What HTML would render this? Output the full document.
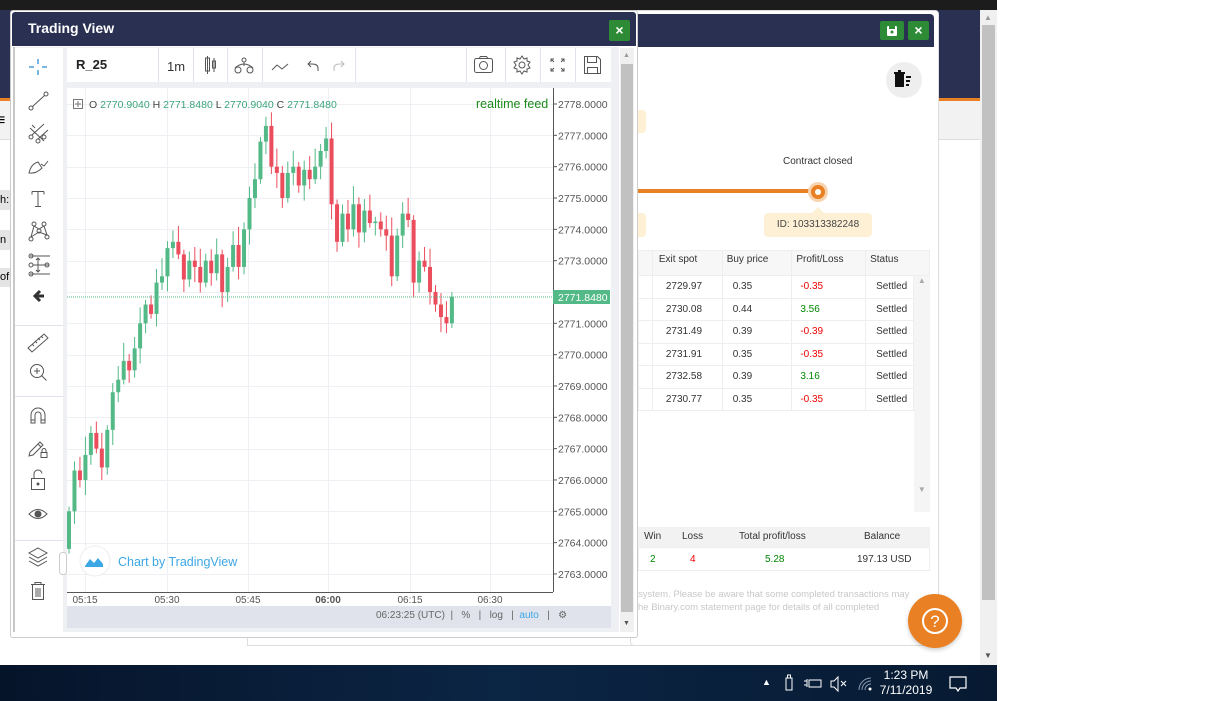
<!DOCTYPE html>
<html><head><meta charset="utf-8"><style>
*{margin:0;padding:0;box-sizing:border-box}
body{width:1219px;height:701px;position:relative;overflow:hidden;background:#fff;font-family:"Liberation Sans",sans-serif}
.a{position:absolute}
.tb td{border:1px solid #eee;font-size:10px;color:#333;padding-left:20px;height:22.5px}
</style></head><body>
<!-- background page -->
<div class="a" style="left:0;top:0;width:997px;height:665px;background:#fff"></div>
<div class="a" style="left:0;top:0;width:997px;height:10px;background:#1c1c1c"></div>
<div class="a" style="left:0;top:10px;width:980px;height:88px;background:#2a3052"></div>
<div class="a" style="left:0;top:98px;width:980px;height:3px;background:#e98024"></div>
<div class="a" style="left:0;top:101px;width:980px;height:39px;background:#f2f2f2;border-bottom:1px solid #ddd"></div>
<div class="a" style="left:-4px;top:112px;font-size:16px;font-weight:bold">≡</div>
<div class="a" style="left:0;top:190px;width:10px;height:20px;background:#e4e4e4;font-size:11px;line-height:20px">h:</div>
<div class="a" style="left:0;top:230px;width:10px;height:20px;background:#e4e4e4;font-size:11px;line-height:20px">n</div>
<div class="a" style="left:0;top:268px;width:10px;height:19px;background:#e4e4e4;font-size:11px;line-height:19px">of.</div>
<div class="a" style="left:247px;top:560px;width:690px;height:86px;border:1px solid #ddd;border-top:none;background:#fff"></div>
<div class="a" style="left:980px;top:10px;width:17px;height:655px;background:#f0f0f0"></div>
<div class="a" style="left:982px;top:25px;width:13px;height:575px;background:#c1c1c1"></div>
<div class="a" style="left:984px;top:13px;font-size:8px;color:#999">▲</div>
<div class="a" style="left:984px;top:651px;font-size:8px;color:#555">▼</div>

<!-- right panel (journal) -->
<div class="a" style="left:630px;top:10px;width:309px;height:636px;background:#fff;border:1px solid #ddd;border-radius:4px"></div>
<div class="a" style="left:632px;top:14px;width:302px;height:33px;background:#2a3052;border-radius:4px 4px 0 0"></div>
<div class="a" style="left:880px;top:21px;width:24px;height:19px;background:#2e8b35;border-radius:2px"><svg width="24" height="19"><rect x="7" y="5" width="10" height="10" rx="1" fill="#fff"/><rect x="9" y="5" width="6" height="3" fill="#2e8b35"/><circle cx="12" cy="11" r="1.5" fill="#2e8b35"/></svg></div>
<div class="a" style="left:908px;top:21px;width:21px;height:19px;background:#2e8b35;border-radius:2px;color:#fff;font-size:14px;font-weight:bold;text-align:center;line-height:19px">×</div>
<div class="a" style="left:886px;top:62px;width:36px;height:36px;border-radius:50%;background:#eee"></div>
<svg class="a" style="left:892px;top:70px" width="24" height="20"><rect x="3" y="4" width="9" height="13" fill="#111"/><rect x="2" y="2" width="11" height="2" fill="#111"/><rect x="6" y="0" width="3" height="2" fill="#111"/><rect x="14" y="6" width="5" height="2" fill="#111"/><rect x="14" y="10" width="4" height="2" fill="#111"/><rect x="14" y="14" width="3" height="2" fill="#111"/></svg>
<div class="a" style="left:638px;top:110px;width:8px;height:23px;background:#fdf0d5;border-radius:0 4px 4px 0"></div>
<div class="a" style="left:638px;top:213px;width:8px;height:24px;background:#fdf0d5;border-radius:0 4px 4px 0"></div>
<div class="a" style="left:783px;top:156px;font-size:10px;color:#333">Contract closed</div>
<div class="a" style="left:638px;top:189px;width:180px;height:4px;background:#e98024"></div>
<div class="a" style="left:808px;top:182px;width:20px;height:20px;border-radius:50%;background:#f7d3b0"></div>
<div class="a" style="left:811px;top:185px;width:14px;height:14px;border-radius:50%;background:#e98024"></div>
<div class="a" style="left:815px;top:189px;width:6px;height:6px;border-radius:50%;background:#fff"></div>
<div class="a" style="left:812px;top:207px;width:0;height:0;border:6px solid transparent;border-bottom-color:#fdf0d5;border-top:none"></div>
<div class="a" style="left:764px;top:213px;width:108px;height:24px;background:#fdf0d5;border-radius:4px;font-size:10px;color:#444;text-align:center;line-height:24px">ID: 103313382248</div>
<table class="a tb" style="left:638px;top:250px;width:292px;border-collapse:collapse">
<tr style="background:#f7f7f7"><td style="width:14px;padding:0;height:25px"></td><td style="padding-left:6px;width:70px;font-size:10px;vertical-align:top;padding-top:3px">Exit spot</td><td style="padding-left:4px;width:70px;vertical-align:top;padding-top:3px">Buy price</td><td style="padding-left:4px;width:74px;vertical-align:top;padding-top:3px">Profit/Loss</td><td style="padding-left:4px;vertical-align:top;padding-top:3px" colspan="2">Status</td></tr>
<tr><td style="padding:0"></td><td style="padding-left:13px">2729.97</td><td style="padding-left:10px">0.35</td><td style="padding-left:8px;color:#e00">-0.35</td><td style="padding-left:10px;width:48px">Settled</td><td rowspan="7" style="background:#f5f5f5;border:none;padding:0;width:16px;vertical-align:top;font-size:8px;color:#aaa;text-align:center">▲<div style="height:200px"></div>▼</td></tr>
<tr><td style="padding:0"></td><td style="padding-left:13px">2730.08</td><td style="padding-left:10px">0.44</td><td style="padding-left:8px;color:#080">3.56</td><td style="padding-left:10px">Settled</td></tr>
<tr><td style="padding:0"></td><td style="padding-left:13px">2731.49</td><td style="padding-left:10px">0.39</td><td style="padding-left:8px;color:#e00">-0.39</td><td style="padding-left:10px">Settled</td></tr>
<tr><td style="padding:0"></td><td style="padding-left:13px">2731.91</td><td style="padding-left:10px">0.35</td><td style="padding-left:8px;color:#e00">-0.35</td><td style="padding-left:10px">Settled</td></tr>
<tr><td style="padding:0"></td><td style="padding-left:13px">2732.58</td><td style="padding-left:10px">0.39</td><td style="padding-left:8px;color:#080">3.16</td><td style="padding-left:10px">Settled</td></tr>
<tr><td style="padding:0"></td><td style="padding-left:13px">2730.77</td><td style="padding-left:10px">0.35</td><td style="padding-left:8px;color:#e00">-0.35</td><td style="padding-left:10px">Settled</td></tr>
<tr><td colspan="5" style="border:none;height:101px"></td></tr>
</table>
<div class="a" style="left:638px;top:527px;width:292px;height:20px;background:#f2f2f2;font-size:10px;color:#333"><span class="a" style="left:6px;top:4px">Win</span><span class="a" style="left:44px;top:4px">Loss</span><span class="a" style="left:101px;top:4px">Total profit/loss</span><span class="a" style="left:226px;top:4px">Balance</span></div>
<div class="a" style="left:638px;top:547px;width:292px;height:24px;border:1px solid #eee;font-size:10px"><span class="a" style="left:11px;top:6px;color:#080">2</span><span class="a" style="left:51px;top:6px;color:#e00">4</span><span class="a" style="left:126px;top:6px;color:#080">5.28</span><span class="a" style="left:218px;top:6px;color:#333">197.13 USD</span></div>
<div class="a" style="left:638px;top:588px;font-size:9.5px;color:#c8c8c8;white-space:nowrap;line-height:13px">system. Please be aware that some completed transactions may<br>he Binary.com statement page for details of all completed</div>
<div class="a" style="left:908px;top:594px;width:54px;height:54px;border-radius:50%;background:#e98024;box-shadow:0 2px 4px rgba(0,0,0,.2)"></div>
<div class="a" style="left:922px;top:608px;width:26px;height:26px;border-radius:50%;border:2px solid #fff;color:#fff;font-size:17px;text-align:center;line-height:23px">?</div>

<!-- Trading view window -->
<div class="a" style="left:10px;top:10px;width:628px;height:628px;background:#fff;border:1px solid #ccc;border-radius:3px"></div>
<div class="a" style="left:12px;top:12px;width:624px;height:34px;background:#2a3052;border-radius:3px 3px 0 0"></div>
<div class="a" style="left:28px;top:20px;color:#fff;font-size:14px;font-weight:bold">Trading View</div>
<div class="a" style="left:609px;top:20px;width:21px;height:21px;background:#2e8b35;border-radius:2px;color:#fff;font-size:14px;font-weight:bold;text-align:center;line-height:21px">×</div>
<div class="a" style="left:13px;top:47px;width:606px;height:585px;background:#eef0f3;border-left:2px solid #c8c8c8"></div>
<div class="a" style="left:15px;top:48px;width:48px;height:584px;background:#fff"></div>
<div class="a" style="left:67px;top:48px;width:544px;height:34px;background:#fff"></div>
<div class="a" style="left:67px;top:88px;width:544px;height:518px;background:#fff"></div>
<div class="a" style="left:67px;top:606px;width:544px;height:22px;background:#e0e3eb"></div>
<div class="a" style="left:620px;top:48px;width:14px;height:584px;background:#f0f0f0"></div>
<div class="a" style="left:621px;top:64px;width:12px;height:548px;background:#c1c1c1"></div>
<div class="a" style="left:623px;top:52px;font-size:7px;color:#999">▲</div>
<div class="a" style="left:623px;top:620px;font-size:7px;color:#555">▼</div>
<div class="a" style="left:76px;top:57px;font-size:13px;font-weight:bold;color:#222">R_25</div>
<div class="a" style="left:167px;top:59px;font-size:13px;color:#333">1m</div>
<div class="a" style="left:376px;top:610px;font-size:10px;color:#666;width:236px;white-space:pre">06:23:25 (UTC)  |   %   |   log   |  <span style="color:#3ba7e5">auto</span>   |   ⚙</div>

<svg class="a" style="left:0;top:0" width="1219" height="701" id="s">
<g stroke="#e0e3eb" stroke-width="1">
<line x1="158.5" y1="48" x2="158.5" y2="82"/><line x1="193.5" y1="48" x2="193.5" y2="82"/><line x1="227.5" y1="48" x2="227.5" y2="82"/><line x1="262.5" y1="48" x2="262.5" y2="82"/><line x1="355.5" y1="48" x2="355.5" y2="82"/><line x1="466.5" y1="48" x2="466.5" y2="82"/><line x1="505.5" y1="48" x2="505.5" y2="82"/><line x1="540.5" y1="48" x2="540.5" y2="82"/><line x1="575.5" y1="48" x2="575.5" y2="82"/>
<line x1="15" y1="325.5" x2="63" y2="325.5"/><line x1="15" y1="396.5" x2="63" y2="396.5"/><line x1="15" y1="540.5" x2="63" y2="540.5"/>
</g>
<!-- top toolbar icons -->
<g fill="none" stroke="#555" stroke-width="1">
<rect x="205.5" y="58" width="4" height="13"/><line x1="207.5" y1="56" x2="207.5" y2="74"/><rect x="212.5" y="61" width="3" height="7"/><line x1="214" y1="58" x2="214" y2="72"/>
<circle cx="238" cy="70" r="3"/><circle cx="250" cy="70" r="3"/><circle cx="244" cy="60" r="2"/><path d="M235 68 Q244 60 253 68 M244 62 V66"/>
<path d="M272 70 L277 65 L282 69 L288 64"/>
<path d="M318 71 V68 Q318 64 312 64 H308 M311 61 L308 64 L311 67"/>
<path d="M334 71 V68 Q334 64 340 64 H344 M341 61 L344 64 L341 67" stroke="#bbb"/>
<rect x="474.5" y="58.5" width="18" height="14" rx="2"/><circle cx="483.5" cy="65.5" r="4"/><path d="M479 58.5 l1.5 -2 h6 l1.5 2"/>
<circle cx="522" cy="65" r="3"/><path d="M522 56 l2 3 3 -1 0 3 3 1 -2 3 2 3 -3 1 0 3 -3 -1 -2 3 -2 -3 -3 1 0 -3 -3 -1 2 -3 -2 -3 3 -1 0 -3 3 1z"/>
<path d="M551 62 v-3 h3 M551 59 l3 3 M564 62 v-3 h-3 M564 59 l-3 3 M551 68 v3 h3 M551 71 l3 -3 M564 68 v3 h-3 M564 71 l-3 -3"/>
<path d="M584.5 56.5 h13 l3 3 v14 h-16z M587.5 56.5 v6 h9 v-6 M587.5 73.5 v-6 h10 v6"/>
</g>
<!-- left toolbar icons -->
<g fill="none" stroke="#555" stroke-width="1">
<path d="M38 59v5 M38 70v5 M29 67h5 M42 67h5" stroke="#4a9fd8" stroke-width="1.5"/>
<circle cx="31" cy="108" r="2"/><circle cx="46" cy="94" r="2"/><line x1="32.5" y1="106.5" x2="44.5" y2="95.5"/>
<circle cx="31" cy="137" r="2"/><circle cx="38" cy="141" r="2"/><circle cx="44" cy="137" r="2"/><path d="M32 135 L44 124 M38 139 L48 130 M30 128 L44 141 M32 125 l3 3"/>
<path d="M29 173 Q31 164 38 162 L42 168 Q36 174 29 173z M41 164 l3 2 l4 -5"/>
<path d="M32 191.5 h12 M38 191.5 v15 M35 206.5 h6 M32 191.5 v3 M44 191.5 v3"/>
<circle cx="31" cy="239" r="2"/><circle cx="34" cy="224" r="2"/><circle cx="44" cy="224" r="2"/><circle cx="47" cy="237" r="2"/><circle cx="39" cy="231" r="2"/><path d="M31 237 L34 226 L39 229 L44 226 L47 235 L39 232 L31 237"/>
<path d="M30 256 h20 M30 274 h20 M33 265 h16"/><circle cx="31" cy="256" r="2"/><circle cx="31" cy="265" r="2"/><circle cx="31" cy="274" r="2"/><circle cx="47" cy="265" r="2"/><path d="M38 258 v14 M36 260 l2 -2 2 2 M36 270 l2 2 2 -2"/>
<path d="M28 348 l16 -14 4 4 -16 14z M32 344 l2 2 M35 341 l2 2 M38 338 l2 2 M41 336 l2 2"/>
<circle cx="37" cy="371" r="6.5"/><path d="M37 368 v6 M34 371 h6 M41.5 375.5 l5 5"/>
<path d="M31 423 v-8 a7 7 0 0 1 14 0 v8 h-4 v-8 a3 3 0 0 0 -6 0 v8z M31 420 h4 M41 420 h4"/>
<path d="M30 452 l10 -10 3 3 -10 10 -4 1z M38 444 l3 3"/><rect x="41" y="452.5" width="6" height="5"/><path d="M42 452.5 v-2 a2 2 0 0 1 4 0 v2"/>
<rect x="31.5" y="478.5" width="13" height="11"/><path d="M34 478.5 v-4 a4 4 0 0 1 8 -1"/><circle cx="38" cy="484" r="1" fill="#555"/>
<path d="M29 514 Q38 505 47 514 Q38 523 29 514z"/><circle cx="38" cy="514" r="3" fill="#555"/>
<path d="M38 548 l9 5 -9 5 -9 -5z M29 557 l9 5 9 -5 M29 561 l9 5 9 -5"/>
<path d="M31 584.5 h14 M35 584.5 v-2 h6 v2 M32.5 584.5 v15 h11 v-15 M36 588 v9 M38 588 v9 M40 588 v9"/>
</g>
<path d="M44 296 h-8 M40 291 l-5 5 5 5" stroke="#333" stroke-width="3" fill="none"/>
<rect x="59.5" y="552.5" width="7" height="22" rx="3" fill="#fff" stroke="#ccc"/>
<g id="chart"></g>
</svg>

<!-- taskbar -->
<div class="a" style="left:0;top:665px;width:997px;height:36px;background:linear-gradient(90deg,#06142a,#0b2544 50%,#071a32)"></div>
<div class="a" style="left:762px;top:677px;color:#fff;font-size:9px">▲</div>
<svg class="a" style="left:780px;top:674px" width="80" height="20" fill="none" stroke="#fff" stroke-width="1"><rect x="6" y="4" width="6" height="12"/><rect x="7.5" y="1" width="3" height="3"/><path d="M24 7 h3 M24 11 h3 M27 5 v8"/><rect x="29" y="6" width="12" height="7"/><path d="M51 7 h3 l4 -4 v14 l-4 -4 h-3z M61 7 l5 5 M66 7 l-5 5"/></svg>
<svg class="a" style="left:857px;top:676px" width="16" height="16" fill="none" stroke="#8a9ab0" stroke-width="1"><path d="M2 14 A12 12 0 0 1 14 2 M5 14 A9 9 0 0 1 14 5 M8 14 A6 6 0 0 1 14 8"/><circle cx="13" cy="13" r="1.5" fill="#fff" stroke="none"/></svg>
<div class="a" style="left:878px;top:668px;color:#fff;font-size:12px;text-align:center;width:56px;line-height:15px">1:23 PM<br>7/11/2019</div>
<svg class="a" style="left:948px;top:675px" width="20" height="18" fill="none" stroke="#fff" stroke-width="1.2"><path d="M2 2 h16 v11 h-6 l-2 3 -2 -3 h-6z"/></svg>

<script>
var C=[2765.0,2766.3,2766.0,2766.8,2767.5,2767.0,2766.4,2767.6,2768.8,2769.2,2769.8,2769.5,2770.2,2771.0,2771.6,2771.3,2772.3,2772.5,2773.4,2773.6,2773.2,2772.4,2773.0,2772.8,2772.3,2773.0,2772.6,2773.2,2772.0,2772.8,2773.5,2772.8,2774.0,2775.0,2775.6,2776.8,2777.3,2776.0,2775.8,2775.0,2775.8,2776.0,2775.4,2775.9,2775.6,2776.0,2776.5,2776.9,2774.8,2773.6,2774.5,2774.0,2774.8,2773.9,2774.6,2774.2,2774.25,2774.0,2773.8,2772.5,2773.8,2774.5,2774.3,2772.3,2773.0,2772.8,2772.0,2771.6,2771.2,2771.0,2771.848];
function Y(p){return 104+(2778-p)*31.33}
var s='';
// grid
for(var k=0;k<=15;k++){var y=Math.round(Y(2778-k))+.5;s+='<line x1="67" y1="'+y+'" x2="553" y2="'+y+'" stroke="#eef0f3"/>';}
var tx=[85,167,248,328,410,490],tl=['05:15','05:30','05:45','06:00','06:15','06:30'];
for(var i=0;i<6;i++){s+='<line x1="'+(tx[i]+.5)+'" y1="88" x2="'+(tx[i]+.5)+'" y2="592" stroke="#eef0f3"/>';s+='<text x="'+tx[i]+'" y="603" font-size="10" text-anchor="middle" fill="#555"'+(i==3?' font-weight="bold"':'')+'>'+tl[i]+'</text>';}
for(var i=0;i<C.length;i++){var o=i?C[i-1]:2763.8,c=C[i],x=69+5.47*i,up=c>=o,col=up?'#53b987':'#eb4d5c';
var h=Math.max(o,c)+0.15+((i*37)%7)/14,l=Math.min(o,c)-0.15-((i*53)%5)/12;
s+='<line x1="'+x+'" y1="'+Y(h)+'" x2="'+x+'" y2="'+Y(l)+'" stroke="'+col+'"/>';
var t=Y(Math.max(o,c)),b=Y(Math.min(o,c));s+='<rect x="'+(x-2)+'" y="'+t+'" width="4" height="'+Math.max(1,b-t)+'" fill="'+col+'"/>';}
s+='<line x1="67" y1="297" x2="553" y2="297" stroke="#53b987" stroke-dasharray="1,1"/>';
s+='<line x1="553.5" y1="88" x2="553.5" y2="592" stroke="#555"/><line x1="67" y1="592.5" x2="553" y2="592.5" stroke="#555"/>';
for(var k=0;k<=15;k++){var y=Y(2778-k);if(k==6)continue;s+='<line x1="553" y1="'+y+'" x2="557" y2="'+y+'" stroke="#555"/><text x="558" y="'+(y+4)+'" font-size="10.5" fill="#555">'+(2778-k)+'.0000</text>';}
s+='<rect x="553" y="290" width="57" height="14" fill="#53b987"/><text x="558" y="301" font-size="10.5" fill="#fff">2771.8480</text>';
s+='<rect x="73.5" y="99.5" width="9" height="9" fill="none" stroke="#777"/><path d="M78 101v6M75 104h6" stroke="#777"/>';
s+='<text x="89" y="108" font-size="10.5" fill="#444">O <tspan fill="#3aa57a">2770.9040</tspan>  H <tspan fill="#3aa57a">2771.8480</tspan>  L <tspan fill="#3aa57a">2770.9040</tspan>  C <tspan fill="#3aa57a">2771.8480</tspan></text>';
s+='<text x="476" y="108" font-size="12.5" fill="#1b8a1b">realtime feed</text>';
s+='<circle cx="95" cy="561" r="15" fill="#fff" stroke="#eee"/><path d="M85 566 l5 -7 4 4 4 -5 5 6 v3 h-18z" fill="#3ba7e5"/><text x="118" y="566" font-size="12.5" fill="#3ba7e5">Chart by TradingView</text>';
document.getElementById('chart').innerHTML=s;
</script>
</body></html>
